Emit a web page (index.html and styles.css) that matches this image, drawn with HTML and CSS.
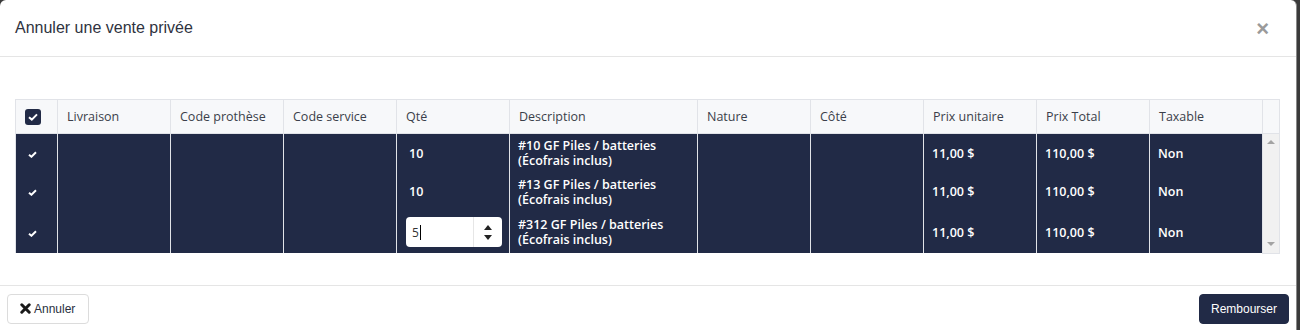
FILE: index.html
```html
<!DOCTYPE html>
<html lang="fr">
<head>
  <meta charset="UTF-8" />
  <title>Annuler une vente privée</title>
  <link rel="stylesheet" href="styles.css">
</head>
<body>

  <div class="modal">
    <div class="modal-header">
      <h4 class="modal-title">Annuler une vente privée</h4>
      <button class="close">&times;</button>
    </div>

    <div class="modal-body">
      <table class="grid">
        <colgroup>
          <col class="c-check">
          <col class="c-std">
          <col class="c-std">
          <col class="c-std">
          <col class="c-std">
          <col class="c-desc">
          <col class="c-std">
          <col class="c-std">
          <col class="c-std">
          <col class="c-std">
          <col class="c-std">
          <col class="c-scroll">
        </colgroup>
        <thead>
          <tr>
            <th class="check-cell">
              <span class="box">
                <svg width="10" height="8" viewBox="0 0 10 8"><path d="M1 4.2 L3.8 6.6 L9 1.4" fill="none" stroke="#fff" stroke-width="2"/></svg>
              </span>
            </th>
            <th>Livraison</th>
            <th>Code prothèse</th>
            <th>Code service</th>
            <th>Qté</th>
            <th>Description</th>
            <th>Nature</th>
            <th>Côté</th>
            <th>Prix unitaire</th>
            <th>Prix Total</th>
            <th>Taxable</th>
            <th></th>
          </tr>
        </thead>
        <tbody>
          <tr class="r1">
            <td class="check-cell"><svg width="9" height="7" viewBox="0 0 10 8"><path d="M1 4.2 L3.8 6.6 L9 1.4" fill="none" stroke="#fff" stroke-width="2.2"/></svg></td>
            <td></td>
            <td></td>
            <td></td>
            <td class="qty">10</td>
            <td>#10 GF Piles / batteries<br>(Écofrais inclus)</td>
            <td></td>
            <td></td>
            <td>11,00 $</td>
            <td>110,00 $</td>
            <td>Non</td>
            <td class="scrollbar" rowspan="3">
              <div class="track">
                <span class="arrow up"></span>
                <span class="arrow down"></span>
              </div>
            </td>
          </tr>
          <tr class="r2">
            <td class="check-cell"><svg width="9" height="7" viewBox="0 0 10 8"><path d="M1 4.2 L3.8 6.6 L9 1.4" fill="none" stroke="#fff" stroke-width="2.2"/></svg></td>
            <td></td>
            <td></td>
            <td></td>
            <td class="qty">10</td>
            <td>#13 GF Piles / batteries<br>(Écofrais inclus)</td>
            <td></td>
            <td></td>
            <td>11,00 $</td>
            <td>110,00 $</td>
            <td>Non</td>
          </tr>
          <tr class="r3">
            <td class="check-cell"><svg width="9" height="7" viewBox="0 0 10 8"><path d="M1 4.2 L3.8 6.6 L9 1.4" fill="none" stroke="#fff" stroke-width="2.2"/></svg></td>
            <td></td>
            <td></td>
            <td></td>
            <td>
              <div class="spin">
                <span class="spin-value">5<i class="caret"></i></span>
                <span class="spin-btns">
                  <span class="arrow-up"></span>
                  <span class="arrow-down"></span>
                </span>
              </div>
            </td>
            <td>#312 GF Piles / batteries<br>(Écofrais inclus)</td>
            <td></td>
            <td></td>
            <td>11,00 $</td>
            <td>110,00 $</td>
            <td>Non</td>
          </tr>
        </tbody>
      </table>
    </div>

    <div class="modal-footer">
      <button class="btn btn-default">
        <svg width="11" height="11" viewBox="0 0 11 11"><path d="M1.8 1.8 L9.2 9.2 M9.2 1.8 L1.8 9.2" stroke="#1a1a1a" stroke-width="3" stroke-linecap="round"/></svg>
        Annuler
      </button>
      <button class="btn btn-primary">Rembourser</button>
    </div>
  </div>

</body>
</html>
```

FILE: styles.css
```css
body {
  margin: 0;
  background-color: #3a3a3a;
  overflow: hidden;
}

.modal {
  width: 1296px;
  min-height: 340px;
  background: #fff;
  border-right: 1px solid #8a8a8a;
  border-radius: 6px 6px 0 0;
  font-family: "Liberation Sans", Arial, sans-serif;
  color: #333;
}

.modal-header {
  height: 57px;
  box-sizing: border-box;
  border-bottom: 1px solid #e5e5e5;
  display: flex;
  align-items: center;
  justify-content: space-between;
  padding: 0 27px 0 15px;
}

.modal-title {
  margin: 0;
  font-size: 16px;
  font-weight: normal;
  color: #2f3340;
}

.close {
  border: none;
  background: none;
  padding: 0;
  font-family: "Liberation Sans", Arial, sans-serif;
  font-size: 22px;
  font-weight: bold;
  color: #9a9a9a;
  line-height: 1;
  margin-top: 1px;
}

.modal-body {
  padding: 42px 15px 31px;
}

.grid {
  width: 1265px;
  table-layout: fixed;
  border-collapse: collapse;
  font-family: "Open Sans", sans-serif;
}

.c-check { width: 42px; }
.c-std { width: 113px; }
.c-desc { width: 188px; }
.c-scroll { width: 17px; }

.grid th {
  height: 33px;
  background-color: #f7f8fa;
  border: 1px solid #e1e3e8;
  text-align: left;
  font-weight: normal;
  font-size: 12.5px;
  color: #3b3f4a;
  padding: 0 9px;
}

.grid td {
  background-color: #212a46;
  color: #fff;
  font-size: 12.5px;
  font-weight: 600;
  line-height: 15px;
  padding: 0 8px;
  border-left: 1px solid #e1e3e8;
  border-right: 1px solid #e1e3e8;
}

.grid .r1 td { height: 38px; }
.grid .r2 td { height: 39px; }
.grid .r3 td { height: 42px; }

.grid .check-cell {
  text-align: left;
  padding: 0 0 0 12px;
}

.grid th.check-cell {
  padding-left: 9px;
}

.box {
  display: inline-flex;
  width: 16px;
  height: 16px;
  border-radius: 3px;
  background-color: #212a46;
  align-items: center;
  justify-content: center;
  vertical-align: middle;
}

.grid td.qty {
  padding-left: 12px;
}

.grid td.scrollbar {
  background-color: #f1f1f1;
  padding: 0;
  border-bottom: 1px solid #e1e3e8;
}

.track {
  height: 118px;
  display: flex;
  flex-direction: column;
  justify-content: space-between;
  align-items: center;
  padding: 6px 0;
  box-sizing: border-box;
}

.arrow {
  width: 0;
  height: 0;
  border-left: 4px solid transparent;
  border-right: 4px solid transparent;
}

.arrow.up { border-bottom: 4px solid #a3a3a3; }
.arrow.down { border-top: 4px solid #a3a3a3; }

.spin {
  display: flex;
  width: 96px;
  height: 30px;
  background: #fff;
  border-radius: 4px;
  box-sizing: border-box;
  margin-left: 1px;
}

.spin-value {
  flex: 1;
  display: flex;
  align-items: center;
  padding-left: 6px;
  color: #333;
  font-weight: normal;
  font-size: 12px;
}

.caret {
  display: inline-block;
  width: 1px;
  height: 15px;
  background: #000;
  margin-left: 1px;
}

.spin-btns {
  width: 28px;
  border-left: 1px solid #e6e6e6;
  display: flex;
  flex-direction: column;
  justify-content: center;
  align-items: center;
  gap: 5px;
}

.arrow-up, .arrow-down {
  width: 0;
  height: 0;
  border-left: 4px solid transparent;
  border-right: 4px solid transparent;
}

.arrow-up { border-bottom: 5px solid #222; }
.arrow-down { border-top: 5px solid #222; }

.modal-footer {
  border-top: 1px solid #e5e5e5;
  padding: 8px 7px;
  display: flex;
  justify-content: space-between;
}

.btn {
  height: 30px;
  border-radius: 4px;
  font-family: "Liberation Sans", Arial, sans-serif;
  font-size: 12px;
  display: inline-flex;
  align-items: center;
  gap: 3px;
}

.btn-default {
  background: #fff;
  border: 1px solid #dcdcdc;
  color: #2a3040;
  padding: 0 13px 0 12px;
}

.btn-primary {
  background-color: #212a46;
  border: 1px solid #212a46;
  color: #fff;
  padding: 0 11px;
}
```
